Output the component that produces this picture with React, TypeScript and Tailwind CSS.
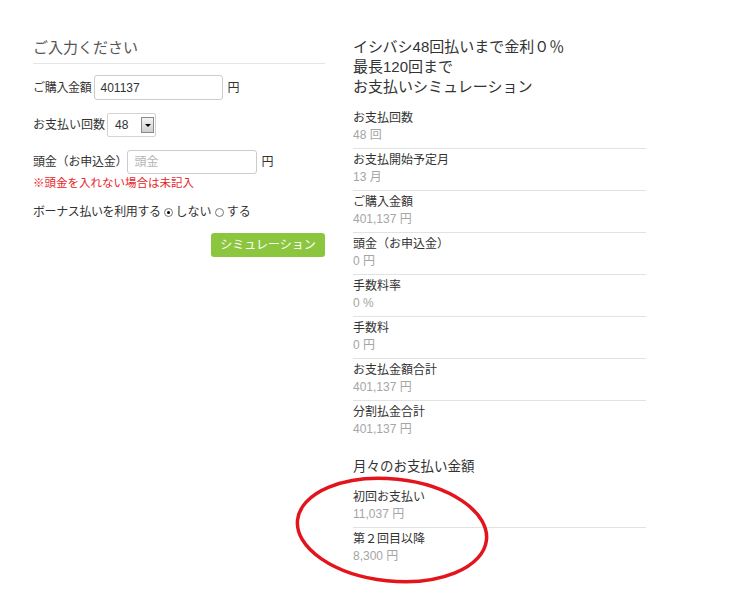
import React from "react";

const font = { fontFamily: '"Liberation Sans", "Noto Sans CJK JP", sans-serif' };

function Item({ label, value, last }: { label: string; value: string; last?: boolean }) {
  return (
    <div className={`pt-[3px] pb-[4px] ${last ? "" : "border-b border-[#e2e2e2]"}`}>
      <div className="text-[12px] leading-[17px] text-[#333]">{label}</div>
      <div className="text-[12px] leading-[17px] text-[#a5a5a5]">{value}</div>
    </div>
  );
}

export default function App() {
  return (
    <div className="relative w-[731px] h-[600px] bg-white" style={font}>
      <div className="flex pt-[37px] pl-[33px]">
        {/* Left column */}
        <div className="w-[292px] mt-px">
          <div className="text-[15px] leading-[20px] text-[#555] pb-[5px] border-b border-[#e5e5e5]">
            ご入力ください
          </div>
          <div className="mt-[11px] flex items-center gap-[2px] text-[12px] text-[#333]">
            <span className="tracking-[-0.3px]">ご購入金額</span>
            <div className="w-[129px] h-[25px] border border-[#ccc] rounded-[3px] flex items-center px-[6px] text-[12px] text-[#333]">
              401137
            </div>
            <span className="ml-[3px]">円</span>
          </div>
          <div className="mt-[13px] flex items-center gap-[2px] text-[12px] text-[#333]">
            <span>お支払い回数</span>
            <div className="w-[49px] h-[24px] border border-[#d4d4d4] rounded-[2px] flex items-center pl-[7px] pr-[1px]">
              <span className="flex-1">48</span>
              <div className="w-[13px] h-[16px] border border-[#8a8a8a] bg-gradient-to-b from-[#f4f4f4] to-[#cfcfcf] flex items-center justify-center">
                <div className="w-0 h-0 border-l-[3px] border-r-[3px] border-t-[3px] border-l-transparent border-r-transparent border-t-black" />
              </div>
            </div>
          </div>
          <div className="mt-[13px] flex items-center text-[12px] text-[#333]">
            <span className="tracking-[-0.2px]">頭金（お申込金）</span>
            <div className="w-[130px] h-[24px] border border-[#ccc] rounded-[3px] flex items-center px-[6px] text-[12px] text-[#b5b5b5]">
              頭金
            </div>
            <span className="ml-[4px]">円</span>
          </div>
          <div className="text-[11.5px] leading-[16px] mt-px text-[#e8262b]">※頭金を入れない場合は未記入</div>
          <div className="mt-[13px] flex items-center text-[12px] leading-[16px] text-[#333]">
            <span className="tracking-[-0.4px]">ボーナス払いを利用する</span>
            <span className="ml-[3px] mr-[3px] w-[9px] h-[9px] rounded-full border border-[#777] flex items-center justify-center">
              <span className="w-[3px] h-[3px] rounded-full bg-black" />
            </span>
            <span>しない</span>
            <span className="ml-[3px] mr-[3px] w-[9px] h-[9px] rounded-full border border-[#777]" />
            <span>する</span>
          </div>
          <div className="mt-[13px] flex justify-end">
            <div className="w-[114px] h-[24px] rounded-[3px] bg-[#8cc63f] text-white text-[12px] flex items-center justify-center">
              シミュレーション
            </div>
          </div>
        </div>

        {/* Right column */}
        <div className="w-[293px] ml-[28px]">
          <div className="text-[15px] leading-[20px] text-[#333]">
            <div>イシバシ48回払いまで金利０％</div>
            <div>最長120回まで</div>
            <div>お支払いシミュレーション</div>
          </div>
          <div className="mt-[10px]">
            <Item label="お支払回数" value="48 回" />
            <Item label="お支払開始予定月" value="13 月" />
            <Item label="ご購入金額" value="401,137 円" />
            <Item label="頭金（お申込金）" value="0 円" />
            <Item label="手数料率" value="0 %" />
            <Item label="手数料" value="0 円" />
            <Item label="お支払金額合計" value="401,137 円" />
            <Item label="分割払金合計" value="401,137 円" last />
          </div>
          <div className="mt-[15px] text-[13.5px] leading-[20px] text-[#333]">月々のお支払い金額</div>
          <div className="mt-[9px]">
            <Item label="初回お支払い" value="11,037 円" />
            <Item label="第２回目以降" value="8,300 円" last />
          </div>
        </div>
      </div>

      <svg className="absolute left-0 top-0 pointer-events-none" width="731" height="600">
        <ellipse
          cx="392"
          cy="530"
          rx="95"
          ry="51"
          fill="none"
          stroke="#e3141c"
          strokeWidth="3.5"
          transform="rotate(6 392 530)"
        />
      </svg>
    </div>
  );
}
